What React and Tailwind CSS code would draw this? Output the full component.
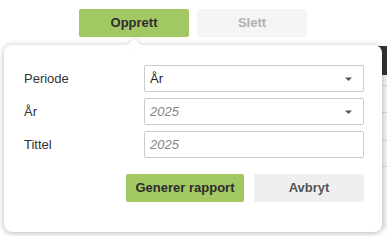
import React from "react";

function Caret() {
  return (
    <svg width="7" height="4" viewBox="0 0 7 4" className="text-[#555]">
      <path d="M0 0.5 L7 0.5 L3.5 4 Z" fill="currentColor" />
    </svg>
  );
}

export default function App() {
  return (
    <div className="relative w-[387px] h-[236px] bg-white overflow-hidden font-['Liberation_Sans',Arial,sans-serif]">
      {/* toolbar */}
      <div className="flex gap-2 pl-[79px] pt-[9px]">
        <button className="w-[110px] h-[28px] rounded-[2px] bg-[#a2c863] text-[13px] font-bold text-[#2d2d2d]">
          Opprett
        </button>
        <button className="w-[110px] h-[28px] rounded-[2px] bg-[#f5f5f5] text-[13px] font-bold text-[#b0b0b0]">
          Slett
        </button>
      </div>
      {/* background table (mostly hidden behind popover) */}
      <div className="mt-[9px] ml-[300px] flex flex-col border-l border-[#d0d0d0]">
        <div className="h-[29px] bg-[#333]" />
        <div className="h-[11px] bg-[#f4f4f4] border-b border-[#d8d8d8]" />
        <div className="h-[27px] bg-[#f4f4f4] border-b border-[#d8d8d8]" />
        <div className="h-[28px] bg-[#f4f4f4] border-b border-[#d8d8d8]" />
        <div className="h-[26px] bg-[#f4f4f4] border-b border-[#d8d8d8]" />
        <div className="h-[62px] bg-[#f4f4f4]" />
      </div>

      {/* popover */}
      <div className="absolute left-[4px] top-[45px] w-[378px] h-[187px] bg-white rounded-[8px] shadow-[0_1px_6px_rgba(0,0,0,0.3)]">
        <div className="absolute left-[125px] top-[-5px] w-[10px] h-[10px] bg-white rotate-45 shadow-[-1px_-1px_2px_rgba(0,0,0,0.1)]" />
        <div className="relative flex flex-col gap-[6px] pl-[20px] pr-[18px] pt-[20px]">
          <div className="flex items-center">
            <span className="w-[120px] text-[13px] text-[#333]">Periode</span>
            <div className="flex-1 h-[27px] border border-[#ccc] rounded-[2px] flex items-center justify-between pl-[5px] pr-[11px]">
              <span className="text-[13px] text-[#222]">År</span>
              <Caret />
            </div>
          </div>
          <div className="flex items-center">
            <span className="w-[120px] text-[13px] text-[#333]">År</span>
            <div className="flex-1 h-[27px] border border-[#ccc] rounded-[2px] flex items-center justify-between pl-[5px] pr-[11px]">
              <span className="text-[13px] italic text-[#888]">2025</span>
              <Caret />
            </div>
          </div>
          <div className="flex items-center">
            <span className="w-[120px] text-[13px] text-[#333]">Tittel</span>
            <div className="flex-1 h-[27px] border border-[#ccc] rounded-[2px] flex items-center pl-[5px]">
              <span className="text-[13px] italic text-[#888]">2025</span>
            </div>
          </div>
          <div className="flex justify-end gap-[10px] mt-[10px]">
            <button className="w-[118px] h-[28px] rounded-[2px] bg-[#a2c863] text-[13px] font-bold text-[#2d2d2d]">
              Generer rapport
            </button>
            <button className="w-[110px] h-[28px] rounded-[2px] bg-[#efefef] text-[13px] font-bold text-[#555]">
              Avbryt
            </button>
          </div>
        </div>
      </div>
    </div>
  );
}
